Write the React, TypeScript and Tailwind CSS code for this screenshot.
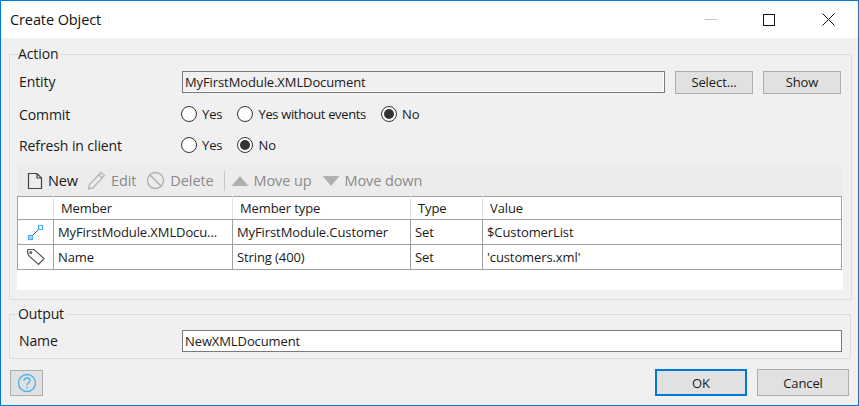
import React from "react";

function Radio({ label, checked, tight }: { label: string; checked?: boolean; tight?: boolean }) {
  return (
    <div className="flex items-center gap-[5px]">
      <span className="flex h-[16px] w-[16px] items-center justify-center rounded-full border border-[#333333] bg-white">
        {checked && <span className="h-[10px] w-[10px] rounded-full bg-[#333333]" />}
      </span>
      <span className={`text-[13px] text-[#1a1a1a] ${tight ? "tracking-[-0.35px]" : ""}`}>{label}</span>
    </div>
  );
}

function Tool({ icon, label, active }: { icon: React.ReactNode; label: string; active?: boolean }) {
  return (
    <div className={`flex items-center gap-[5px] text-[14.5px] ${active ? "text-[#1a1a1a]" : "text-[#8a8a8a]"}`}>
      {icon}
      <span>{label}</span>
    </div>
  );
}

const rows = [
  { icon: "assoc", member: "MyFirstModule.XMLDocu...", type: "MyFirstModule.Customer", t: "Set", value: "$CustomerList" },
  { icon: "tag", member: "Name", type: "String (400)", t: "Set", value: "'customers.xml'" },
];

export default function App() {
  return (
    <div
      className="flex h-[406px] w-[859px] flex-col overflow-hidden border border-[#0078d7] bg-[#f0f0f0] text-[14px] leading-[20px] text-[#1a1a1a]"
      style={{ fontFamily: '"Open Sans", "Noto Sans", sans-serif', letterSpacing: "-0.1px" }}
    >
      <div className="flex h-[37px] shrink-0 items-center justify-between bg-white pl-[9px]">
        <span className="text-[14.5px] text-[#111111]">Create Object</span>
        <div className="flex items-center pr-[23px]">
          <div className="mr-[46px] h-px w-[12px] bg-[#c4c4c4]" />
          <div className="mr-[47px] h-[12px] w-[12px] border border-[#111111]" />
          <svg width="13" height="13" viewBox="0 0 13 13" stroke="#111111" strokeWidth="1" fill="none">
            <path d="M0.5 0.5 L12.5 12.5 M12.5 0.5 L0.5 12.5" />
          </svg>
        </div>
      </div>

      <fieldset className="mx-[8px] mt-[6px] h-[256px] shrink-0 border border-[#dcdcdc] px-[8px]">
        <legend className="h-[20px] pr-[2px] leading-[20px]">Action</legend>
        <div className="mt-[6px] flex h-[24px] items-center">
          <span className="w-[164px] shrink-0 pl-[1px]">Entity</span>
          <div className="flex h-[22px] w-[483px] items-center border border-[#7a7a7a] bg-[#f0f0f0] pl-[2px] text-[13px] shadow-[inset_-1px_-1px_0_#ffffff]">
            MyFirstModule.XMLDocument
          </div>
          <button className="ml-[10px] h-[23px] w-[78px] border border-[#adadad] bg-[#e1e1e1] text-[13px]">Select...</button>
          <button className="ml-[10px] h-[23px] w-[78px] border border-[#adadad] bg-[#e1e1e1] text-[13px]">Show</button>
        </div>
        <div className="mt-[8px] flex h-[23px] items-center">
          <span className="w-[163px] shrink-0 pl-[1px] pt-[2px]">Commit</span>
          <div className="flex items-center gap-[15px]">
            <Radio label="Yes" />
            <Radio label="Yes without events" tight />
            <Radio label="No" checked />
          </div>
        </div>
        <div className="mt-[8px] flex h-[23px] items-center">
          <span className="w-[163px] shrink-0 pl-[1px] pt-[2px]">Refresh in client</span>
          <div className="flex items-center gap-[15px]">
            <Radio label="Yes" />
            <Radio label="No" checked />
          </div>
        </div>

        <div className="ml-[-1px] mt-[9px] flex h-[31px] w-[826px] items-center gap-[10px] bg-[#ececec] pl-[10px]">
          <div className="mr-[-1px]">
            <Tool
              active
              label="New"
              icon={
                <svg width="16" height="18" viewBox="0 0 16 18" fill="none" stroke="#444444" strokeWidth="1.2">
                  <path d="M1.5 1.5 H10 L14.5 6 V16.5 H1.5 Z M10 1.5 V6 H14.5" />
                </svg>
              }
            />
          </div>
          <Tool
            label="Edit"
            icon={
              <svg width="19" height="19" viewBox="0 0 19 19" fill="none" stroke="#b5b5b5" strokeWidth="1.3">
                <path d="M14 1.5 L17.5 4.5 L6 17 L1.5 18 L2.5 13.5 Z M12 4 L15.5 7" />
              </svg>
            }
          />
          <Tool
            label="Delete"
            icon={
              <svg width="19" height="19" viewBox="0 0 19 19" fill="none" stroke="#b0b0b0" strokeWidth="1.4">
                <circle cx="9.5" cy="9.5" r="8" />
                <path d="M4 4 L15 15" />
              </svg>
            }
          />
          <div className="flex h-[20px] items-center gap-[10px] border-l border-[#c8c8c8] pl-[6px]">
            <Tool
              label="Move up"
              icon={
                <svg width="18" height="12" viewBox="0 0 18 12" fill="#b0b0b0">
                  <path d="M9 1 L17.5 11 H0.5 Z" />
                </svg>
              }
            />
            <Tool
              label="Move down"
              icon={
                <svg width="18" height="12" viewBox="0 0 18 12" fill="#b0b0b0">
                  <path d="M9 11 L17.5 1 H0.5 Z" />
                </svg>
              }
            />
          </div>
        </div>

        <div className="ml-[-1px] h-[94px] w-[826px] bg-white">
          <table className="w-[825px] table-fixed border-collapse text-[13px]">
            <colgroup>
              <col className="w-[36px]" />
              <col className="w-[179px]" />
              <col className="w-[178px]" />
              <col className="w-[72px]" />
              <col />
            </colgroup>
            <thead>
              <tr className="h-[23px]">
                <th className="border border-[#a0a0a0] border-r-[#e0e0e0] font-normal" />
                <th className="border border-[#a0a0a0] border-r-[#e0e0e0] pl-[7px] text-left font-normal">Member</th>
                <th className="border border-[#a0a0a0] border-r-[#e0e0e0] pl-[7px] text-left font-normal">Member type</th>
                <th className="border border-[#a0a0a0] border-r-[#e0e0e0] pl-[7px] text-left font-normal">Type</th>
                <th className="border border-[#a0a0a0] pl-[7px] text-left font-normal">Value</th>
              </tr>
            </thead>
            <tbody>
              {rows.map((r) => (
                <tr key={r.member} className="h-[25px]">
                  <td className="border border-[#a0a0a0] p-0">
                    <div className="flex justify-center">
                      {r.icon === "assoc" ? (
                        <svg width="18" height="18" viewBox="0 0 18 18" fill="none">
                          <path d="M5 13 L12 6" stroke="#555555" strokeWidth="1" />
                          <rect x="1.5" y="12.5" width="4" height="4" stroke="#4fb0f5" strokeWidth="1.2" fill="#a8d8fa" />
                          <rect x="11.5" y="2.5" width="4" height="4" stroke="#4fb0f5" strokeWidth="1.2" fill="#ffffff" />
                        </svg>
                      ) : (
                        <svg width="20" height="18" viewBox="0 0 20 18" fill="none" stroke="#555555" strokeWidth="1.2">
                          <path d="M1.5 3.5 L2 1.5 L8 1.5 L18 10.5 L12.5 16.5 L2.5 7.5 Z" />
                          <circle cx="4.8" cy="4.5" r="1" />
                        </svg>
                      )}
                    </div>
                  </td>
                  <td className="border border-[#a0a0a0] pl-[4px]">{r.member}</td>
                  <td className="border border-[#a0a0a0] pl-[4px]">{r.type}</td>
                  <td className="border border-[#a0a0a0] pl-[4px]">{r.t}</td>
                  <td className="border border-[#a0a0a0] pl-[4px]">{r.value}</td>
                </tr>
              ))}
            </tbody>
          </table>
        </div>
      </fieldset>

      <fieldset className="mx-[8px] mt-[4px] h-[55px] shrink-0 border border-[#dcdcdc] px-[8px]">
        <legend className="h-[20px] pr-[2px] leading-[20px]">Output</legend>
        <div className="mt-[6px] flex h-[22px] items-center">
          <span className="w-[164px] shrink-0 pl-[1px]">Name</span>
          <div className="flex h-[22px] w-[660px] items-center border border-[#7a7a7a] bg-white pl-[2px] text-[13px]">
            NewXMLDocument
          </div>
        </div>
      </fieldset>

      <div className="flex items-start justify-between pl-[9px] pr-[9px] pt-[10px]">
        <button className="mt-px flex h-[26px] w-[33px] items-center justify-center border border-[#adadad] bg-[#e1e1e1]">
          <svg width="20" height="20" viewBox="0 0 20 20" fill="none" stroke="#4fb0f5" strokeWidth="1.4">
            <circle cx="10" cy="10" r="8.5" />
            <path d="M7 7.8 C7 5.8 8.4 5 10 5 C11.7 5 13 6 13 7.6 C13 9.8 10 9.8 10 12.2" />
            <path d="M10 14 V15.6" />
          </svg>
        </button>
        <div className="flex gap-[10px]">
          <button className="h-[27px] w-[92px] border-2 border-[#0078d7] bg-[#e1e1e1] text-[13px]">OK</button>
          <button className="h-[27px] w-[92px] border border-[#adadad] bg-[#e1e1e1] text-[13px]">Cancel</button>
        </div>
      </div>
    </div>
  );
}
